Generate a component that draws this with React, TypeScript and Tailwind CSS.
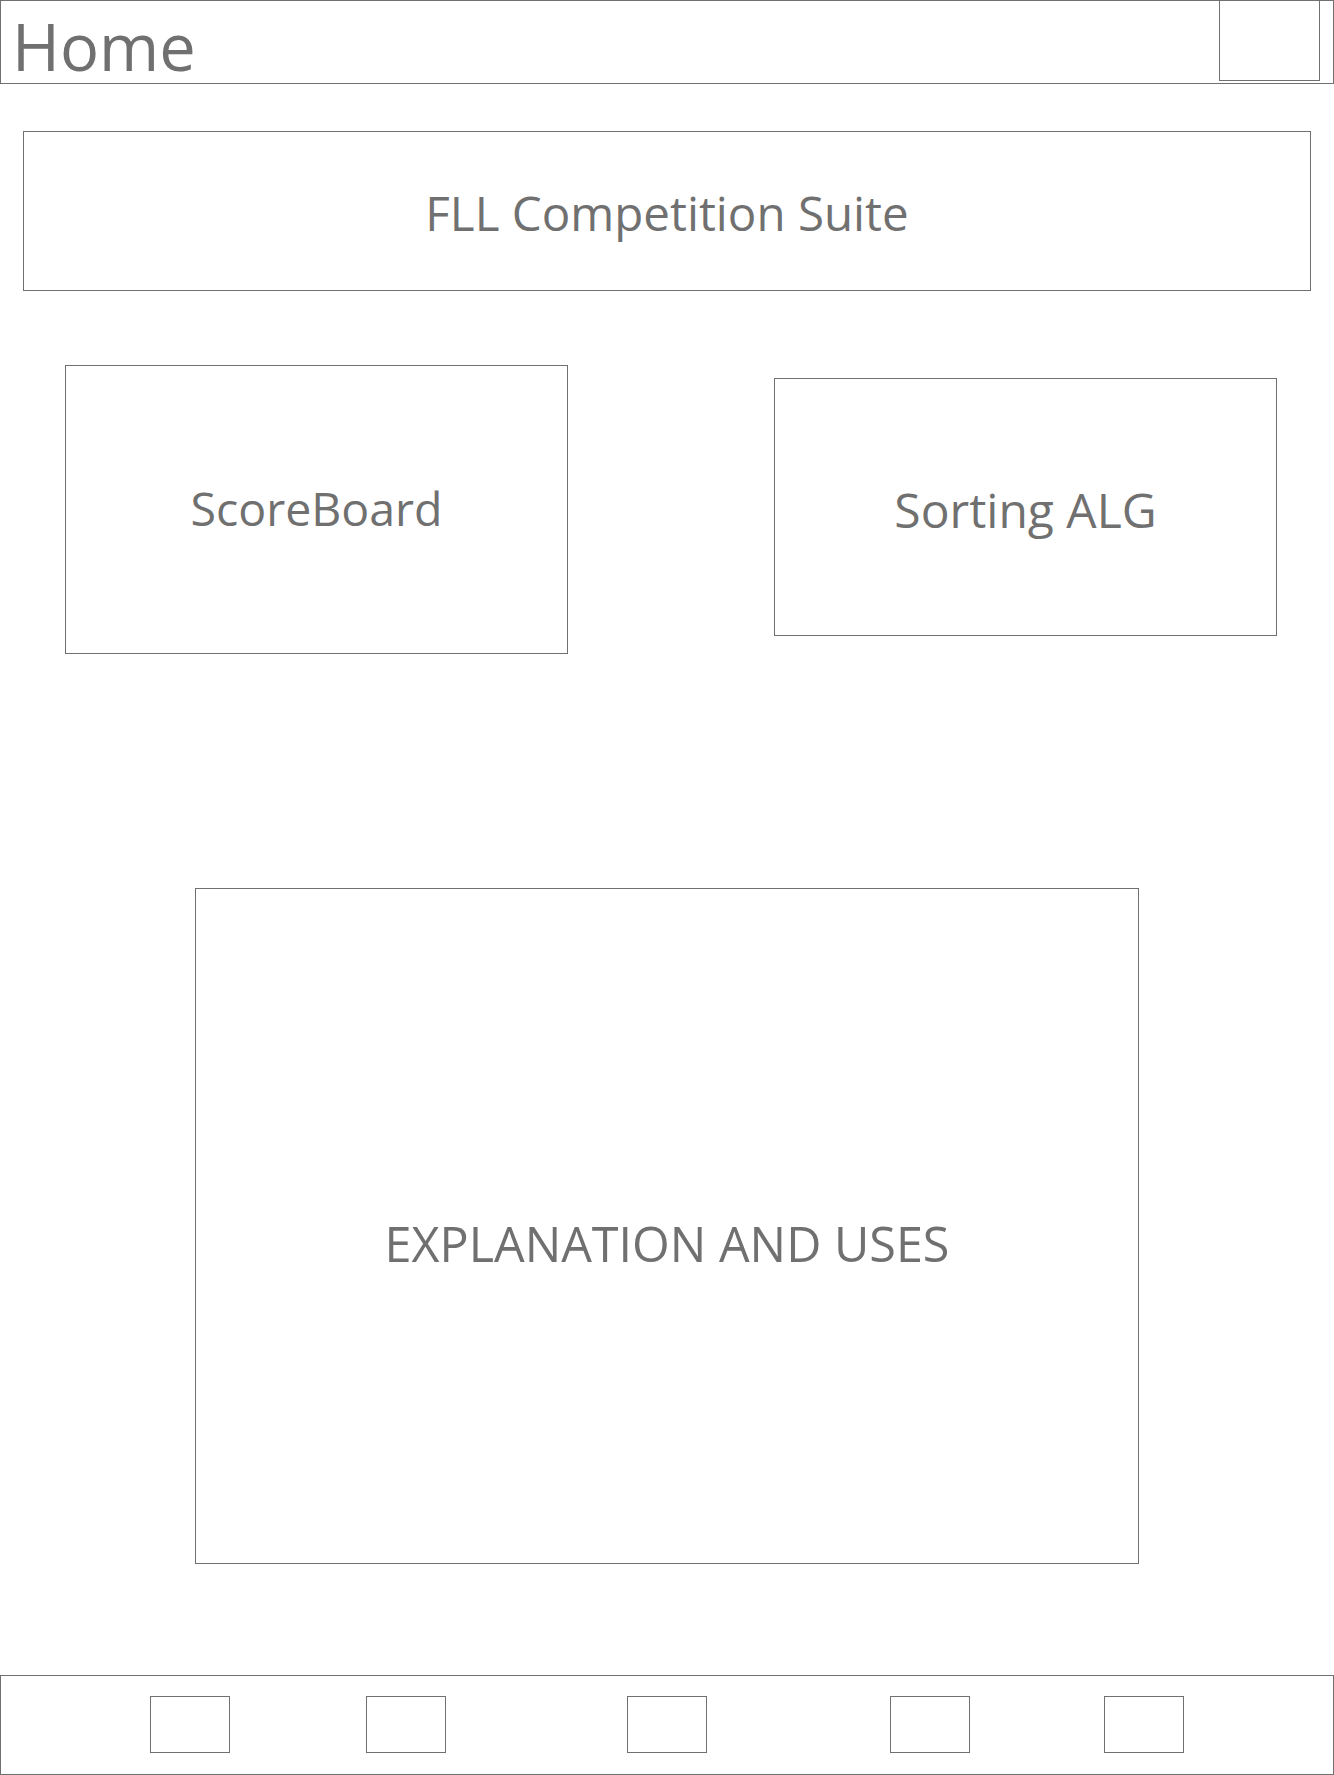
import React from "react";

const font = "font-['Open_Sans','Noto_Sans',sans-serif] text-[#707070]";

function Tile({ label, className, textClass }: { label: string; className: string; textClass: string }) {
  return (
    <div className={`flex items-center justify-center border border-[#707070] ${className}`}>
      <span className={`${font} ${textClass} leading-none`}>{label}</span>
    </div>
  );
}

export default function App() {
  return (
    <div className="flex h-[1775px] w-[1334px] flex-col bg-white">
      {/* top bar */}
      <div className="flex h-[84px] items-start justify-between border border-[#707070]">
        <span className={`${font} pl-[11px] pt-[13px] text-[65px] leading-none`}>Home</span>
        <div className="mr-[13px] h-[80px] w-[101px] border border-t-0 border-[#707070]" />
      </div>

      <div className="mx-[23px] mt-[47px] flex h-[160px] items-center justify-center border border-[#707070] pt-[4px]">
        <span className={`${font} text-[47.5px] leading-none`}>FLL Competition Suite</span>
      </div>

      <div className="mt-[74px] flex items-start">
        <Tile label="ScoreBoard" className="ml-[65px] h-[289px] w-[503px]" textClass="text-[46.5px] pb-[2px]" />
        <Tile label="Sorting ALG" className="ml-[206px] mt-[13px] h-[258px] w-[503px]" textClass="text-[48px] pt-[6px]" />
      </div>

      <div className="ml-[195px] mt-[234px] flex h-[676px] w-[944px] items-center justify-center border border-[#707070] pt-[34px]">
        <span className={`${font} text-[48.5px] leading-none`}>EXPLANATION AND USES</span>
      </div>

      {/* bottom nav */}
      <div className="mt-auto flex h-[100px] items-start border border-[#707070] pl-[149px] pt-[20px]">
        <div className="h-[57px] w-[80px] border border-[#707070]" />
        <div className="ml-[136px] h-[57px] w-[80px] border border-[#707070]" />
        <div className="ml-[181px] h-[57px] w-[80px] border border-[#707070]" />
        <div className="ml-[183px] h-[57px] w-[80px] border border-[#707070]" />
        <div className="ml-[134px] h-[57px] w-[80px] border border-[#707070]" />
      </div>
    </div>
  );
}
